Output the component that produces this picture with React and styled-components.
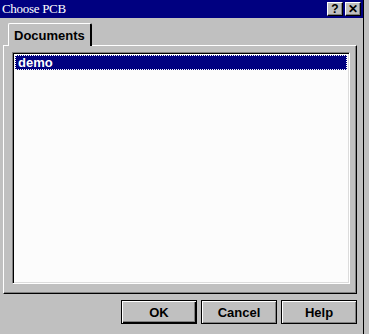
import React from 'react'
import styled, { createGlobalStyle } from 'styled-components'

const Global = createGlobalStyle`
  html, body { margin: 0; padding: 0; background: #c0c0c0; }
  body { width: 369px; height: 334px; overflow: hidden; }
`

const Dialog = styled.div`
  width: 364px;
  height: 334px;
  background: #c0c0c0;
  border-right: 1px solid #000;
  box-sizing: border-box;
  display: flex;
  flex-direction: column;
  font-family: "Liberation Sans", Arial, sans-serif;
`

const TitleBar = styled.div`
  height: 18px;
  background: #000080;
  display: flex;
  align-items: center;
  padding: 0 2px 0 2px;
`

const Title = styled.div`
  flex: 1;
  color: #fff;
  font-family: "Liberation Serif", "Times New Roman", serif;
  font-size: 13px;
  letter-spacing: -0.3px;
`

const CapButton = styled.div`
  width: 16px;
  height: 14px;
  margin-left: ${p => p.gap || 0}px;
  box-sizing: border-box;
  background: #c0c0c0;
  border-top: 1px solid #fff;
  border-left: 1px solid #fff;
  border-right: 1px solid #000;
  border-bottom: 1px solid #000;
  box-shadow: inset -1px -1px 0 #808080;
  display: flex;
  align-items: center;
  justify-content: center;
  font-weight: bold;
  font-size: 12px;
  color: #000;
  line-height: 1;
`

const Body = styled.div`
  flex: 1;
  padding: 5px 6px 0 3px;
  display: flex;
  flex-direction: column;
`

const Tabs = styled.div`
  display: flex;
  padding-left: 5px;
  height: 22px;
`

const Tab = styled.div`
  width: 84px;
  box-sizing: border-box;
  border-top: 1px solid #fff;
  border-left: 1px solid #fff;
  border-right: 2px solid #000;
  border-top-left-radius: 2px;
  border-top-right-radius: 2px;
  background: #c0c0c0;
  font-weight: bold;
  font-size: 13px;
  padding: 4px 0 0 5px;
  position: relative;
  z-index: 1;
  margin-bottom: -1px;
`

const Panel = styled.div`
  height: 249px;
  box-sizing: border-box;
  border-top: 1px solid #fff;
  border-left: 1px solid #fff;
  border-right: 1px solid #000;
  border-bottom: 1px solid #000;
  box-shadow: inset -1px -1px 0 #808080;
  padding: 6px 6px 9px 8px;
  display: flex;
`

const List = styled.div`
  flex: 1;
  background: #fcfcfc;
  border-top: 1px solid #808080;
  border-left: 1px solid #808080;
  border-right: 1px solid #fff;
  border-bottom: 1px solid #fff;
  box-shadow: inset 1px 1px 0 #000, inset -1px -1px 0 #dcdcdc;
  padding: 2px;
`

const Item = styled.div`
  height: 15px;
  background: ${p => (p.selected ? '#000080' : 'transparent')};
  color: ${p => (p.selected ? '#fff' : '#000')};
  outline: ${p => (p.selected ? '1px dotted #fff' : 'none')};
  outline-offset: -1px;
  font-weight: bold;
  font-size: 13px;
  line-height: 15px;
  padding-left: 3px;
`

const Footer = styled.div`
  display: flex;
  justify-content: flex-end;
  gap: 4px;
  padding: 6px 0 0 0;
`

const Button = styled.div`
  width: 76px;
  height: 24px;
  box-sizing: border-box;
  background: #c0c0c0;
  border: 1px solid #000;
  box-shadow: ${p => (p.primary
    ? 'inset 1px 1px 0 #fff, inset -1px -1px 0 #000, inset -2px -2px 0 #808080'
    : 'inset 1px 1px 0 #fff, inset -1px -1px 0 #808080')};
  display: flex;
  align-items: center;
  justify-content: center;
  font-weight: bold;
  font-size: 13px;
`

export default function App() {
  return (
    <>
      <Global />
      <Dialog>
        <TitleBar>
          <Title>Choose PCB</Title>
          <CapButton>?</CapButton>
          <CapButton gap={2}>✕</CapButton>
        </TitleBar>
        <Body>
          <Tabs>
            <Tab>Documents</Tab>
          </Tabs>
          <Panel>
            <List>
              <Item selected>demo</Item>
            </List>
          </Panel>
          <Footer>
            <Button primary>OK</Button>
            <Button>Cancel</Button>
            <Button>Help</Button>
          </Footer>
        </Body>
      </Dialog>
    </>
  )
}
